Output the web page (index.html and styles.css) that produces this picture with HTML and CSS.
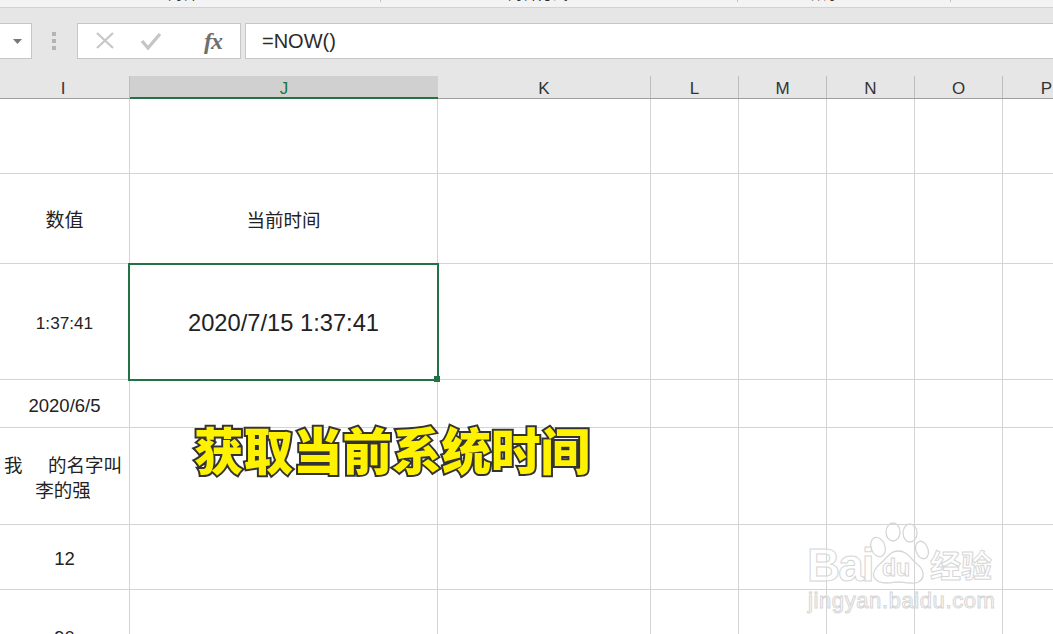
FILE: index.html
```html
<!DOCTYPE html>
<html lang="zh">
<head>
<meta charset="utf-8">
<title>Excel</title>
<link rel="stylesheet" href="styles.css">
</head>
<body>
<div class="app">
  <div class="ribbon">
    <span class="rib rib-a">对齐</span>
    <span class="rib-sep sep-a"></span>
    <span class="rib rib-b">对齐方式</span>
    <span class="rib-sep sep-b"></span>
    <span class="rib rib-c">数字</span>
    <span class="rib-sep sep-c"></span>
  </div>
  <div class="formula-row">
    <div class="namebox"><svg class="caret" width="9" height="5" viewBox="0 0 9 5"><path d="M0 0h9L4.500 5z"/></svg></div>
    <div class="grip"><i></i><i></i><i></i></div>
    <div class="fn-box">
      <svg class="fn-icon" width="20" height="20" viewBox="0 0 20 20"><path d="M2 2l16 15M18 2L2 17" fill="none" stroke="#c6c6c6" stroke-width="2.200"/></svg>
      <svg class="fn-icon" width="22" height="20" viewBox="0 0 22 20"><path d="M2 10l6 7L20 3" fill="none" stroke="#c6c6c6" stroke-width="3.400"/></svg>
      <span class="fx">fx</span>
    </div>
    <div class="formula">=NOW()</div>
  </div>
  <div class="sheet">
    <div class="col-headers">
      <div class="ch w-i first">I</div>
      <div class="ch w-j selected">J</div>
      <div class="ch w-k">K</div>
      <div class="ch w-n">L</div>
      <div class="ch w-n">M</div>
      <div class="ch w-n">N</div>
      <div class="ch w-n">O</div>
      <div class="ch w-n">P</div>
    </div>
    <div class="row h1"><div class="c w-i"></div><div class="c w-j"></div><div class="c w-k"></div><div class="c w-n"></div><div class="c w-n"></div><div class="c w-n"></div><div class="c w-n"></div><div class="c w-n"></div></div>
    <div class="row h2"><div class="c w-i big">数值</div><div class="c w-j">当前时间</div><div class="c w-k"></div><div class="c w-n"></div><div class="c w-n"></div><div class="c w-n"></div><div class="c w-n"></div><div class="c w-n"></div></div>
    <div class="row h3"><div class="c w-i time">1:37:41</div><div class="c w-j active">2020/7/15 1:37:41</div><div class="c w-k"></div><div class="c w-n"></div><div class="c w-n"></div><div class="c w-n"></div><div class="c w-n"></div><div class="c w-n"></div></div>
    <div class="row h4"><div class="c w-i">2020/6/5</div><div class="c w-j"></div><div class="c w-k"></div><div class="c w-n"></div><div class="c w-n"></div><div class="c w-n"></div><div class="c w-n"></div><div class="c w-n"></div></div>
    <div class="row h5"><div class="c w-i name">我&nbsp;&nbsp;&nbsp;&nbsp;&nbsp;的名字叫<br>李的强</div><div class="c w-j"></div><div class="c w-k"></div><div class="c w-n"></div><div class="c w-n"></div><div class="c w-n"></div><div class="c w-n"></div><div class="c w-n"></div></div>
    <div class="row h6"><div class="c w-i twelve">12</div><div class="c w-j"></div><div class="c w-k"></div><div class="c w-n"></div><div class="c w-n"></div><div class="c w-n"></div><div class="c w-n"></div><div class="c w-n"></div></div>
    <div class="row h7"><div class="c w-i low">90</div><div class="c w-j"></div><div class="c w-k"></div><div class="c w-n"></div><div class="c w-n"></div><div class="c w-n"></div><div class="c w-n"></div><div class="c w-n"></div></div>
    <div class="selection"><span class="handle"></span></div>
  </div>
  <div class="caption">获取当前系统时间</div>
  <div class="watermark">
    <svg class="paw" width="62" height="66" viewBox="0 0 62 66">
      <g fill="none" stroke="#d6d6d6" stroke-width="1.300">
        <ellipse cx="11" cy="25" rx="7" ry="10" transform="rotate(-20 11 25)"/>
        <ellipse cx="26" cy="10" rx="7" ry="9"/>
        <ellipse cx="43" cy="11" rx="7" ry="9"/>
        <ellipse cx="55" cy="28" rx="6" ry="9" transform="rotate(-20 55 28)"/>
        <path d="M31 29c-8 0-11 7-17 12-6 5-9 9-7 14 2 5 7 6 13 6 4 0 8-1 11-1s8 1 12 1c7 1 12-2 13-7 1-5-2-9-7-13-6-5-9-12-18-12z"/>
      </g>
    </svg>
    <span class="wm-bai">Bai</span>
    <span class="wm-du">du</span>
    <span class="wm-jy">经验</span>
    <span class="wm-url">jingyan.baidu.com</span>
  </div>
</div>
</body>
</html>
```
FILE: styles.css
```css
* { box-sizing: border-box; }
html, body { margin: 0; padding: 0; }
body { width: 1053px; height: 634px; overflow: hidden; background: #fff; font-family: "Liberation Sans", "Noto Sans CJK SC", sans-serif; color: #222; }
.app { position: relative; width: 1053px; height: 634px; overflow: hidden; }
.ribbon { position: relative; height: 8px; background: #f3f3f3; border-bottom: 1px solid #d2d2d2; overflow: hidden; }
.rib { position: absolute; top: -15px; font-size: 15px; line-height: 18px; color: #333; }
.rib-a { left: 168px; }
.rib-b { left: 508px; }
.rib-c { left: 811px; }
.rib-sep { position: absolute; top: 0; width: 1px; height: 2px; background: #c4c4c4; }
.sep-a { left: 380px; }
.sep-b { left: 737px; }
.sep-c { left: 950px; }
.formula-row { display: flex; align-items: stretch; height: 68px; padding: 15px 0 17px; background: #e6e6e6; }
.namebox { display: flex; align-items: center; justify-content: flex-end; width: 32px; background: #fff; border: 1px solid #c6c6c6; border-left: 0; padding-right: 9px; }
.caret { fill: #777; }
.grip { display: flex; flex-direction: column; justify-content: center; gap: 3px; width: 45px; padding-left: 20px; }
.grip i { display: block; width: 4px; height: 4px; background: #b4b4b4; }
.fn-box { display: flex; align-items: center; width: 164px; background: #fff; border: 1px solid #c6c6c6; padding-left: 17px; }
.fn-icon { margin-right: 25px; }
.fx { font-family: "Liberation Serif", serif; font-style: italic; font-weight: 700; font-size: 24px; color: #6e6e6e; letter-spacing: -1px; margin-left: 17px; }
.formula { flex: 1; margin-left: 4px; background: #fff; border: 1px solid #c6c6c6; border-right: 0; padding-left: 16px; font-size: 20px; line-height: 34px; color: #2b2b2b; }
.sheet { position: relative; }
.col-headers { display: flex; width: 1200px; height: 23px; background: #e6e6e6; border-bottom: 1px solid #9e9e9e; }
.ch { display: flex; align-items: flex-start; justify-content: center; height: 22px; padding-top: 2px; font-size: 17px; line-height: 22px; color: #333; border-right: 1px solid #bdbdbd; }
.ch.first { padding-right: 3px; }
.ch.selected { background: #d0d0d0; color: #217346; height: 23px; border-bottom: 2px solid #217346; border-right: 0; }
.w-i { width: 130px; flex: none; }
.w-j { width: 308px; flex: none; }
.w-k { width: 213px; flex: none; }
.w-n { width: 88px; flex: none; }
.row { display: flex; width: 1200px; border-bottom: 1px solid #d4d4d4; }
.h1 { height: 75px; }
.h2 { height: 90px; }
.h3 { height: 116px; }
.h4 { height: 48px; }
.h5 { height: 97px; }
.h6 { height: 65px; }
.h7 { height: 60px; border-bottom: 0; }
.c { display: flex; align-items: center; justify-content: center; text-align: center; padding-top: 4px; font-size: 18.500px; line-height: 25px; color: #222; border-right: 1px solid #d4d4d4; white-space: nowrap; overflow: hidden; }
.big { font-size: 19px; }
.time { font-size: 17.200px; }
.name { padding-top: 3px; padding-right: 3px; }
.twelve { padding-top: 2px; }
.active { font-size: 23.700px; }
.low { align-items: flex-start; padding-top: 35px; }
.selection { position: absolute; left: 128px; top: 187px; width: 311px; height: 118px; border: 2px solid #217346; }
.handle { position: absolute; right: -3px; bottom: -3px; width: 6px; height: 6px; background: #217346; }
.caption { position: absolute; left: 194px; top: 420px; font-family: "Noto Sans CJK SC", sans-serif; font-weight: 900; font-size: 49.500px; line-height: 58px; color: #fff200; -webkit-text-stroke: 4px #333; paint-order: stroke fill; white-space: nowrap; }
.watermark { position: absolute; left: 805px; top: 520px; width: 200px; height: 100px; }
.paw { position: absolute; left: 62px; top: 2px; }
.wm-bai, .wm-du, .wm-jy, .wm-url { position: absolute; color: rgba(255, 255, 255, .6); -webkit-text-stroke: 1px #d6d6d6; white-space: nowrap; }
.wm-bai { left: 2px; top: 20px; font-size: 46px; line-height: 50px; letter-spacing: -2px; font-weight: 700; }
.wm-du { left: 77px; top: 34px; font-size: 23px; line-height: 28px; font-weight: 700; }
.wm-jy { left: 125px; top: 26px; font-size: 31px; line-height: 36px; font-family: "Noto Sans CJK SC", sans-serif; font-weight: 700; }
.wm-url { left: 3px; top: 68px; font-size: 22px; line-height: 26px; letter-spacing: 0.6px; }
```
